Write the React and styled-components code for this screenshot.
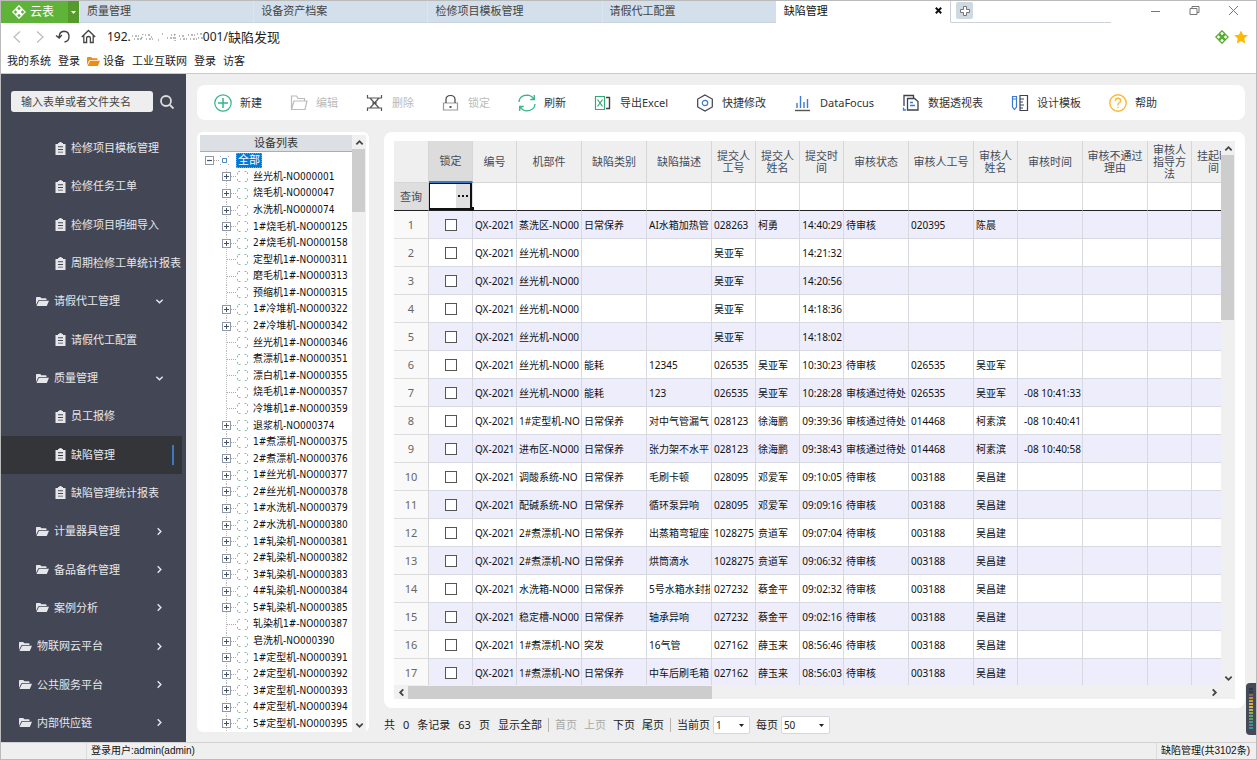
import React from "react";
import styled, { createGlobalStyle, css } from "styled-components";

const Global = createGlobalStyle`
  *, *::before, *::after { box-sizing: border-box; }
  html, body { margin: 0; padding: 0; }
  body, button, input, select {
    font-family: "Noto Sans", "Noto Sans CJK SC", sans-serif;
    font-size: 11px;
    line-height: 16px;
    color: #222;
  }
  button { border: 0; padding: 0; background: none; cursor: pointer; }
  svg { display: block; flex: none; }
  a { color: inherit; text-decoration: none; }
  ul { list-style: none; margin: 0; padding: 0; }
`;

const Window = styled.div`
  position: relative;
  display: flex;
  flex-direction: column;
  height: 100vh;
  min-height: 600px;
  overflow: hidden;
  border: 1px solid #bbb;
  background: #efefef;
`;

/* ---------- browser chrome ---------- */
const TitleBar = styled.header`
  display: flex;
  height: 22px;
  flex: none;
  background: #fff;
`;
const Brand = styled.button`
  display: flex;
  align-items: center;
  gap: 4px;
  width: 67px;
  padding-left: 11px;
  background: #5fb338;
  color: #fff;
  font-size: 12px;
`;
const BrandMenu = styled.button`
  display: flex;
  align-items: center;
  justify-content: center;
  width: 11px;
  background: #559b2c;
  color: #fff;
`;
const TabStrip = styled.nav`
  display: flex;
  flex: 1;
  min-width: 0;
`;
const Tab = styled.button`
  display: flex;
  flex: 1;
  align-items: center;
  justify-content: space-between;
  min-width: 0;
  padding: 0 8px 2px 7px;
  background: #d3dfea;
  border-left: 1px solid #dde6ee;
  border-bottom: 1px solid #c8d3de;
  color: #444;
  ${(p) =>
    p.$active &&
    css`
      background: #fff;
      border-color: #fff;
      border-right: 1px solid #c9d0d8;
      color: #111;
    `}
`;
const TabTools = styled.div`
  width: 160px;
  padding: 1px 5px;
  border-bottom: 1px solid #ccd2d8;
`;
const NewTab = styled.button`
  display: grid;
  place-items: center;
  width: 17px;
  height: 17px;
  border-radius: 2px;
  background: #cfd9e1;
`;
const WindowButtons = styled.div`
  display: flex;
  justify-content: flex-end;
  gap: 28px;
  width: 145px;
  padding: 4px 17px 0 0;
  color: #777;
`;
const AddressRow = styled.div`
  display: flex;
  align-items: center;
  flex: none;
  height: 29px;
  padding: 0 8px 2px 10px;
  background: #fff;
  color: #444;
`;
const NavButtons = styled.div`
  display: flex;
  align-items: center;
  gap: 11px;
  width: 96px;
`;
const Address = styled.a`
  display: flex;
  flex: 1;
  align-items: center;
  font-size: 13px;
  color: #222;
`;
const Host = styled.span`
  font-size: 12px;
`;
const AddressIcons = styled.div`
  display: flex;
  gap: 5px;
`;
const Bookmarks = styled.nav`
  display: flex;
  align-items: center;
  gap: 7px;
  flex: none;
  height: 22px;
  padding: 0 6px 3px;
  background: #fff;
  border-bottom: 1px solid #cacaca;
  a { display: flex; align-items: center; gap: 3px; }
`;

/* ---------- sidebar ---------- */
const Body = styled.div`
  display: flex;
  flex: 1;
  min-height: 0;
`;
const Sidebar = styled.aside`
  display: flex;
  flex-direction: column;
  width: 185px;
  flex: none;
  background: #434655;
  color: #e6e7ea;
`;
const SearchRow = styled.form`
  display: flex;
  align-items: center;
  gap: 6px;
  height: 55px;
  flex: none;
  padding-left: 10px;
`;
const SearchInput = styled.input`
  width: 142px;
  height: 21px;
  padding: 0 10px;
  border: 0;
  border-radius: 3px;
  background: #eee;
  &::placeholder { color: #444; opacity: 1; }
`;
const Menu = styled.ul`
  display: flex;
  flex-direction: column;
  flex: 1;
  min-height: 0;
`;
const MenuItem = styled.li`
  flex: 1;
  min-height: 0;
  margin-right: 4px;
  background: ${(p) => (p.$active ? "#333539" : "transparent")};
`;
const MenuLink = styled.a`
  display: flex;
  align-items: center;
  height: 100%;
  padding-left: ${(p) => [18, 35, 54][p.$level]}px;
  padding-right: ${(p) => (p.$active ? 8 : 0)}px;
  white-space: nowrap;
`;
const MenuIcon = styled.span`
  width: ${(p) => (p.$leaf ? 16 : 18)}px;
  flex: none;
`;
const MenuText = styled.span`
  flex: 1;
`;
const MenuArrow = styled.span`
  padding-right: 18px;
`;
const ActiveMark = styled.span`
  width: 2px;
  height: 20px;
  background: #3b78c0;
`;

/* ---------- workspace ---------- */
const Workspace = styled.main`
  display: flex;
  flex-direction: column;
  flex: 1;
  min-width: 0;
  gap: 12px;
  padding: 11px 11px 0 11px;
`;
const Toolbar = styled.div`
  display: flex;
  align-items: center;
  gap: 28px;
  height: 35px;
  flex: none;
  padding: 0 17px;
  border-radius: 8px;
  background: #fff;
`;
const ToolButton = styled.button`
  display: flex;
  align-items: center;
  gap: 8px;
  white-space: nowrap;
  color: #333;
  &:disabled { color: #bbb; }
`;
const Split = styled.div`
  display: flex;
  flex: 1;
  min-height: 0;
  gap: 15px;
`;
const TreePanel = styled.section`
  display: flex;
  width: 172px;
  flex: none;
  margin-bottom: 10px;
  padding: 3px 3px 0;
  border-radius: 6px;
  background: #fff;
`;
const TreeBody = styled.div`
  display: flex;
  flex-direction: column;
  flex: 1;
  min-width: 0;
`;
const TreeTitle = styled.h2`
  margin: 0;
  height: 17px;
  flex: none;
  border-bottom: 1px solid #e0a55a;
  background: #dce0e5;
  color: #333;
  font-size: 11px;
  font-weight: 400;
  line-height: 16px;
  text-align: center;
`;
const TreeList = styled.ul`
  display: flex;
  flex-direction: column;
  flex: 1;
  min-height: 0;
  font-family: "DejaVu Sans Condensed", "Noto Sans CJK SC", sans-serif;
  font-size: 10px;
  line-height: 16px;
  color: #111;
`;
const TreeRow = styled.li`
  display: flex;
  align-items: center;
  flex: 1;
  min-height: 0;
  padding-left: ${(p) => (p.$root ? 5 : 22)}px;
  white-space: nowrap;
`;
const Branch = styled.span`
  display: flex;
  align-items: center;
  align-self: stretch;
  width: 14px;
  ${(p) =>
    p.$line &&
    css`
      background: repeating-linear-gradient(#bbb 0 1px, transparent 1px 2px) 4px 0 / 1px 100% no-repeat;
    `}
`;
const Expander = styled.button`
  display: grid;
  place-items: center;
  width: 9px;
  height: 9px;
  border: 1px solid #9098a8;
  background: #fff;
`;
const Stub = styled.span`
  flex: 1;
  margin-left: ${(p) => (p.$leaf ? 5 : 0)}px;
  border-top: 1px dotted #aaa;
`;
const TreeLabel = styled.span`
  margin-left: 4px;
`;
const RootLabel = styled.span`
  margin-left: 7px;
  padding: 0 1px;
  border: 1px dotted #e09040;
  background: #0078d7;
  color: #fff;
  font-size: 11px;
  line-height: 13px;
`;

/* ---------- scroll bars ---------- */
const VBar = styled.div`
  display: flex;
  flex-direction: column;
  align-items: center;
  width: 14px;
  flex: none;
  background: #f0f0f0;
  color: #444;
`;
const HBar = styled.div`
  display: flex;
  align-items: center;
  height: 14px;
  flex: none;
  background: #f0f0f0;
  color: #444;
`;
const BarButton = styled.button`
  display: grid;
  place-items: center;
  width: 14px;
  height: 14px;
  flex: none;
  color: inherit;
`;
const VTrack = styled.div`
  flex: 1;
  width: 100%;
  padding-right: 1px;
`;
const VThumb = styled.div`
  height: ${(p) => p.$size}%;
  background: #cdcdcd;
`;
const HTrack = styled.div`
  flex: 1;
  height: 100%;
  padding-top: 1px;
`;
const HThumb = styled.div`
  width: ${(p) => p.$size}%;
  height: 100%;
  background: #cdcdcd;
`;
const GridVBar = styled(VBar)`
  padding-bottom: 14px;
`;

/* ---------- grid ---------- */
const GridColumn = styled.div`
  display: flex;
  flex-direction: column;
  flex: 1;
  min-width: 0;
`;
const GridCard = styled.section`
  display: flex;
  flex: 1;
  min-height: 0;
  padding: 9px 10px;
  border-radius: 8px;
  background: #fff;
`;
const GridPane = styled.div`
  display: flex;
  flex-direction: column;
  flex: 1;
  min-width: 0;
`;
const GridView = styled.div`
  flex: 1;
  min-height: 0;
  overflow: hidden;
`;
const Grid = styled.table`
  width: 100%;
  table-layout: fixed;
  border-collapse: separate;
  border-spacing: 0;
  white-space: nowrap;
`;
const ColHead = styled.th`
  height: 42px;
  padding: 0 4px;
  border-right: 1px solid #d6d6d6;
  border-bottom: 1px solid #d6d6d6;
  background: #efefef;
  color: #444b58;
  font-weight: 400;
  line-height: 12px;
  white-space: normal;
  ${(p) =>
    p.$selected &&
    css`
      background: #dcdcdc;
      border-bottom: 2px solid #4176c0;
    `}
`;
const QueryHead = styled.th`
  height: 28px;
  padding: 0;
  border-right: 1px solid #ccc;
  border-bottom: 1px solid #222;
  background: #dedede;
  color: #444b58;
  font-weight: 400;
`;
const QueryCell = styled.td`
  position: relative;
  height: 28px;
  padding: 0;
  border-right: 1px solid #dcdcdc;
  border-bottom: 1px solid #222;
`;
const QueryEditor = styled.div`
  display: flex;
  height: 27px;
  border: solid #111;
  border-width: 1px 2px 2px 1px;
`;
const QueryInput = styled.input`
  flex: 1;
  min-width: 0;
  border: 0;
  outline: 0;
  background: #fff;
`;
const QueryMore = styled.button`
  display: grid;
  place-items: center;
  width: 14px;
  background: #e0e0e0;
`;
const FillHandle = styled.span`
  position: absolute;
  right: -2px;
  bottom: -1px;
  width: 4px;
  height: 4px;
  background: #111;
`;
const RowHead = styled.th`
  height: 28px;
  padding: 0;
  border-right: 1px solid #d6d6d6;
  border-bottom: 1px solid #dcdcdc;
  background: #f9f9f9;
  color: #666;
  font-weight: 400;
`;
const Cell = styled.td`
  height: 28px;
  padding: 0 1px 0 2px;
  border-right: 1px solid #d8d8e0;
  border-bottom: 1px solid #d8d8e0;
  background: ${(p) => (p.$odd ? "#ededfc" : "#fff")};
  color: #111;
  font-size: 10px;
`;
const CellText = styled.div`
  display: flex;
  justify-content: ${(p) => (p.$end ? "flex-end" : "flex-start")};
  overflow: hidden;
`;
const Check = styled.input`
  appearance: none;
  display: block;
  width: 12px;
  height: 12px;
  margin: 0 auto;
  border: 1px solid #555;
  background: #fff;
`;

/* ---------- footer ---------- */
const Pager = styled.div`
  display: flex;
  align-items: center;
  gap: 6px;
  height: 34px;
  flex: none;
  color: #222;
  white-space: nowrap;
`;
const PagerGroup = styled.div`
  display: flex;
  gap: ${(p) => p.$gap}px;
`;
const PagerButton = styled.button`
  &:disabled { color: #aaa; }
`;
const Divider = styled.span`
  width: 1px;
  height: 14px;
  background: #b5b5b5;
`;
const PagerField = styled.label`
  display: flex;
  align-items: center;
  gap: 3px;
`;
const SelectBox = styled.span`
  display: flex;
  align-items: center;
  width: ${(p) => p.$width}px;
  height: 18px;
  padding: 0 5px 0 2px;
  border: 1px solid #d4d7de;
  border-radius: 2px;
  background: #fff;
`;
const Select = styled.select`
  appearance: none;
  flex: 1;
  min-width: 0;
  padding: 0;
  border: 0;
  outline: 0;
  background: none;
  font-size: 10px;
`;
const StatusBar = styled.footer`
  display: flex;
  justify-content: space-between;
  flex: none;
  height: 17px;
  padding: 0 6px 0 85px;
  border-top: 1px solid #d2d2d2;
`;
const StatusItem = styled.span`
  padding-left: 4px;
  border-left: 1px solid #ddd;
  font-family: "Liberation Sans", "Noto Sans CJK SC", sans-serif;
  font-size: 10px;
  color: #111;
`;
const SideMeter = styled.div`
  position: absolute;
  right: 0;
  bottom: 24px;
  width: 10px;
  height: 52px;
  padding: 5px 3px;
  border-radius: 4px 0 0 4px;
  background: #464957;
`;

/* ---------- drawings ---------- */
const Svg = ({ w = 18, h, vw, vh, children, ...rest }) => (
  <svg
    width={w}
    height={h ?? w}
    viewBox={`0 0 ${vw ?? w} ${vh ?? vw ?? h ?? w}`}
    fill="none"
    stroke="currentColor"
    strokeWidth="1.2"
    aria-hidden="true"
    {...rest}
  >
    {children}
  </svg>
);
const CloverIcon = ({ size, ...rest }) => (
  <Svg w={size} vw={14} strokeWidth="1.3" {...rest}>
    <path d="M4.300 3.500 7 .8l2.700 2.700L7 6.200ZM4.300 10.500 7 7.800l2.700 2.700L7 13.200ZM.8 7l2.700-2.700L6.200 7 3.500 9.700ZM7.800 7l2.700-2.700L13.200 7l-2.700 2.700Z" />
  </Svg>
);
const CaretIcon = () => (
  <Svg w={5} h={3} stroke="none" fill="currentColor">
    <path d="M0 0h5L2.5 3Z" />
  </Svg>
);
const Chevron = ({ dir, size = 9, width = 2 }) => (
  <Svg w={size} vw={10} strokeWidth={width}>
    <path
      d={{ up: "M1.5 7 5 3.5 8.5 7", down: "M1.5 3 5 6.5 8.5 3", left: "M7 1.5 3.5 5 7 8.5", right: "M3 1.5 6.5 5 3 8.5" }[dir]}
    />
  </Svg>
);
const FolderIcon = ({ w = 13, ...rest }) => (
  <Svg w={w} h={11} vw={13} vh={11} stroke="none" fill="currentColor" {...rest}>
    <path d="M0 9V1.800Q0 1 .8 1h3.400l1.200 1.300h4.300q.8 0 .8.8v.9H3.200q-.8 0-1.100.7Z" />
    <path d="M.5 10 2.800 5.200q.2-.4.7-.4H13l-2 4.700q-.2.5-.8.5Z" />
  </Svg>
);
const ClipIcon = () => (
  <Svg w={11} h={13} stroke="none" fill="currentColor">
    <path fillRule="evenodd" d="M3 1h1Q4.200 0 5.500 0T7 1h1v1h2.500v11H.5V2H3ZM3 4.300v.9h5v-.9ZM3 7v.9h5V7ZM3 9.700v.9h5v-.9Z" />
  </Svg>
);

const toolIcons = {
  add: (
    <Svg stroke="#35b58b">
      <circle cx="9" cy="9" r="8.200" />
      <path d="M9 4v10M4 9h10" strokeWidth="1.500" />
    </Svg>
  ),
  edit: (
    <Svg stroke="#bbb">
      <path d="M1.500 15.500V2h5l1.500 2.500h6.500V7M1.500 15.500 4 7h13l-2 8.500Z" />
    </Svg>
  ),
  remove: (
    <Svg stroke="#555">
      <path d="M1.500 1v3h14V1M1.500 17v-3h14v3M4 4l9 10M13 4 4 14M6 9h5" />
    </Svg>
  ),
  lock: (
    <Svg stroke="#999">
      <path d="M1.500 9h14v7h-14Z" />
      <path d="M4 9V5.500Q4 1.500 8.500 1.500T13 5.500V9" stroke="#444" />
      <path d="M7.500 13h2" stroke="#444" strokeWidth="1.800" />
    </Svg>
  ),
  refresh: (
    <Svg stroke="#35b58b" strokeWidth="1.300">
      <path d="M1 8Q1.500 1.500 9 1.200q4 0 6.500 3.500M17 10q-.5 6.500-8 6.800-4 0-6.500-3.500M16.300 1v4.500h-4M1.700 17v-4.500h4" />
    </Svg>
  ),
  excel: (
    <Svg stroke="#35a778">
      <path d="M1.500 2.500h9v13h-9ZM3.500 5.500l5 7M8.500 5.500l-5 7" />
      <path d="M12 3.500h3.500v11H12" stroke="#444" strokeWidth="1.400" />
    </Svg>
  ),
  quick: (
    <Svg stroke="#3e4250">
      <path d="m9 1 7.300 4v8L9 17l-7.300-4V5Z" />
      <circle cx="9" cy="9" r="2.700" stroke="#3b7bd0" />
    </Svg>
  ),
  chart: (
    <Svg stroke="#3b7bd0" strokeWidth="1.400">
      <path d="M3 14V9M6.500 14V2M10 14V8M13.500 14V5" />
      <path d="M1 16.500h15" stroke="#555" />
    </Svg>
  ),
  pivot: (
    <Svg stroke="#3e4250" strokeWidth="1.300">
      <path d="M5.500 4.500h7l3.500 3V16H5.500Z" />
      <path d="M2 12V1.500h9.500V4" />
      <path d="M8 8.500h3M8 11.500h5M1.500 13.500V16H4" stroke="#3b7bd0" />
    </Svg>
  ),
  design: (
    <Svg stroke="#3b7bd0">
      <path d="M1.500 2.500H5.500v10.500l-2 2.500-2-2.500ZM1.500 5h4" />
      <path d="M9 1.500H16.500v15H9ZM9 5h4M9 8h3M9 11h4M9 14h3" stroke="#3e4250" />
    </Svg>
  ),
  help: (
    <Svg stroke="#fbb92e" strokeWidth="1.400">
      <circle cx="9" cy="9" r="8.200" />
      <path d="M6.300 7q.2-2.700 2.700-2.700T11.700 6.800Q11.700 8 10 9T9 11.300M9 12.700v1.300" />
    </Svg>
  ),
};

/* ---------- data ---------- */
const tabs = ["质量管理", "设备资产档案", "检修项目模板管理", "请假代工配置", "缺陷管理"];

const menu = [
  [2, "检修项目模板管理"],
  [2, "检修任务工单"],
  [2, "检修项目明细导入"],
  [2, "周期检修工单统计报表"],
  [1, "请假代工管理", "down"],
  [2, "请假代工配置"],
  [1, "质量管理", "down"],
  [2, "员工报修"],
  [2, "缺陷管理"],
  [2, "缺陷管理统计报表"],
  [1, "计量器具管理", "right"],
  [1, "备品备件管理", "right"],
  [1, "案例分析", "right"],
  [0, "物联网云平台", "right"],
  [0, "公共服务平台", "right"],
  [0, "内部供应链", "right"],
];

const tools = [
  ["add", "新建"],
  ["edit", "编辑", true],
  ["remove", "删除", true],
  ["lock", "锁定", true],
  ["refresh", "刷新"],
  ["excel", "导出Excel"],
  ["quick", "快捷修改"],
  ["chart", "DataFocus"],
  ["pivot", "数据透视表"],
  ["design", "设计模板"],
  ["help", "帮助"],
];

const devices = [
  "丝光机-NO000001", "烧毛机-NO000047", "水洗机-NO000074", "1#烧毛机-NO000125", "2#烧毛机-NO000158",
  "定型机1#-NO000311", "磨毛机1#-NO000313", "预缩机1#-NO000315", "1#冷堆机-NO000322", "2#冷堆机-NO000342",
  "丝光机1#-NO000346", "煮漂机1#-NO000351", "漂白机1#-NO000355", "烧毛机1#-NO000357", "冷堆机1#-NO000359",
  "退浆机-NO000374", "1#煮漂机-NO000375", "2#煮漂机-NO000376", "1#丝光机-NO000377", "2#丝光机-NO000378",
  "1#水洗机-NO000379", "2#水洗机-NO000380", "1#轧染机-NO000381", "2#轧染机-NO000382", "3#轧染机-NO000383",
  "4#轧染机-NO000384", "5#轧染机-NO000385", "轧染机1#-NO000387", "皂洗机-NO000390", "1#定型机-NO000391",
  "2#定型机-NO000392", "3#定型机-NO000393", "4#定型机-NO000394", "5#定型机-NO000395",
];

const columns = [
  ["锁定", 44], ["编号", 44], ["机部件", 65], ["缺陷类别", 65], ["缺陷描述", 65],
  ["提交人工号", 44], ["提交人姓名", 44], ["提交时间", 44], ["审核状态", 65], ["审核人工号", 65],
  ["审核人姓名", 44], ["审核时间", 65], ["审核不通过理由", 65], ["审核人指导方法", 44], ["挂起时间", 44],
];
const TIME_COLUMNS = [6, 10];

const daily = "日常保养";
const wait = "待审核";
const passed = "审核通过待处";
const rows = [
  ["蒸洗区-NO00", daily, "AI水箱加热管", "028263", "柯勇", "14:40:29", wait, "020395", "陈晨", ""],
  ["丝光机-NO00", "", "", "吴亚军", "", "14:21:32", "", "", "", ""],
  ["丝光机-NO00", "", "", "吴亚军", "", "14:20:56", "", "", "", ""],
  ["丝光机-NO00", "", "", "吴亚军", "", "14:18:36", "", "", "", ""],
  ["丝光机-NO00", "", "", "吴亚军", "", "14:18:02", "", "", "", ""],
  ["丝光机-NO00", "能耗", "12345", "026535", "吴亚军", "10:30:23", wait, "026535", "吴亚军", ""],
  ["丝光机-NO00", "能耗", "123", "026535", "吴亚军", "10:28:28", passed, "026535", "吴亚军", "-08 10:41:33"],
  ["1#定型机-NO", daily, "对中气管漏气", "028123", "徐海鹏", "09:39:36", passed, "014468", "柯素滨", "-08 10:40:41"],
  ["进布区-NO00", daily, "张力架不水平", "028123", "徐海鹏", "09:38:43", passed, "014468", "柯素滨", "-08 10:40:58"],
  ["调酸系统-NO", daily, "毛刷卡顿", "028095", "邓爱军", "09:10:05", wait, "003188", "吴昌建", ""],
  ["配碱系统-NO", daily, "循环泵异响", "028095", "邓爱军", "09:09:16", wait, "003188", "吴昌建", ""],
  ["2#煮漂机-NO", daily, "出蒸箱弯辊座", "1028275", "贲道军", "09:07:04", wait, "003188", "吴昌建", ""],
  ["2#煮漂机-NO", daily, "烘筒滴水", "1028275", "贲道军", "09:06:32", wait, "003188", "吴昌建", ""],
  ["水洗箱-NO00", daily, "5号水箱水封损", "027232", "蔡金平", "09:02:32", wait, "003188", "吴昌建", ""],
  ["稳定槽-NO00", daily, "轴承异响", "027232", "蔡金平", "09:02:16", wait, "003188", "吴昌建", ""],
  ["1#煮漂机-NO", "突发", "16气管", "027162", "薛玉来", "08:56:46", wait, "003188", "吴昌建", ""],
  ["1#煮漂机-NO", daily, "中车后刷毛箱", "027162", "薛玉来", "08:56:03", wait, "003188", "吴昌建", ""],
];

const meter = ["#283a50", "#283a50", "#8a6a40", "#c08a40", "#c8a040", "#d0b048", "#d0b850", "#b8b850", "#90b058", "#68a860", "#50a070", "#489888", "#409090", "#389098"];

/* ---------- parts ---------- */
function Chrome() {
  return (
    <>
      <TitleBar>
        <Brand>
          <CloverIcon size={14} />
          云表
        </Brand>
        <BrandMenu aria-label="菜单">
          <CaretIcon />
        </BrandMenu>
        <TabStrip>
          {tabs.map((t, i) => (
            <Tab key={t} $active={i === 4}>
              {t}
              {i === 4 && (
                <Svg w={7} strokeWidth="2"><path d="m.8.8 5.400 5.400M6.200.8.8 6.200" /></Svg>
              )}
            </Tab>
          ))}
        </TabStrip>
        <TabTools>
          <NewTab aria-label="新标签">
            <Svg w={10} stroke="#777" fill="#fff" strokeWidth="1">
              <path d="M3.500 .5h3v3h3v3h-3v3h-3v-3h-3v-3h3Z" />
            </Svg>
          </NewTab>
        </TabTools>
        <WindowButtons>
          <Svg w={11} strokeWidth="1"><path d="M1 6.500h9" /></Svg>
          <Svg w={11} strokeWidth="1"><path d="M1 3.500h7v6H1ZM3 3.500v-2h7v6H8" /></Svg>
          <Svg w={11} strokeWidth="1"><path d="m1 1 9 9M10 1l-9 9" /></Svg>
        </WindowButtons>
      </TitleBar>
      <AddressRow>
        <NavButtons>
          <Svg w={11} h={14} stroke="#bbb"><path d="M9 1.500 3 7l6 5.500" /></Svg>
          <Svg w={11} h={14} stroke="#bbb"><path d="m4 1.500 6 5.500-6 5.500" /></Svg>
          <Svg w={15} strokeWidth="1.400">
            <path d="M1 6.500 4.200 9 6.800 6M4 8.500Q4.200 2.500 9 2.300q5 .2 5 5.200T9.500 13" />
          </Svg>
          <Svg w={15} strokeWidth="1.300">
            <path d="M.8 8 7.500 1.500 14.200 8M2.800 6.500v7h2.800V9q0-1.500 1.900-1.500T9.400 9v4.500h2.800v-7" />
          </Svg>
        </NavButtons>
        <Address href="#address">
          <Host>192.</Host>
          <Svg w={72} h={12} stroke="#777" strokeWidth="1" strokeDasharray="1 2 2 1 1 3">
            <path d="M1 5h8M3 8h8M12 3l-2 6M14 4h6M15 8h7M20 6h3M27 9h2M31 3h2M36 7h9M40 4h4M44 3v7M48 5h6M49 8h7M57 4h7M59 8h8M66 3h5M67 7h6" />
          </Svg>
          <Host>001/</Host>缺陷发现
        </Address>
        <AddressIcons>
          <CloverIcon size={14} stroke="#5aab32" />
          <Svg w={14} stroke="none" fill="#ffb900">
            <path d="m7 .5 2 4.300 4.800.5-3.500 3.300.9 4.900L7 11.200l-4.200 2.300.9-4.900L.2 5.300 5 4.800Z" />
          </Svg>
        </AddressIcons>
      </AddressRow>
      <Bookmarks>
        <a href="#system">我的系统</a>
        <a href="#login">登录</a>
        <a href="#device"><FolderIcon color="#f28a14" />设备</a>
        <a href="#iiot">工业互联网</a>
        <a href="#login2">登录</a>
        <a href="#guest">访客</a>
      </Bookmarks>
    </>
  );
}

function SideNav() {
  return (
    <Sidebar>
      <SearchRow>
        <SearchInput aria-label="搜索" placeholder="输入表单或者文件夹名" />
        <Svg w={16} stroke="#ddd" strokeWidth="1.800">
          <circle cx="7" cy="7" r="5" />
          <path d="m10.800 10.800 3.700 3.700" />
        </Svg>
      </SearchRow>
      <Menu>
        {menu.map(([level, text, arrow]) => {
          const active = text === "缺陷管理";
          return (
            <MenuItem key={text} $active={active}>
              <MenuLink href={`#${text}`} $level={level} $active={active}>
                <MenuIcon $leaf={level === 2}>{level === 2 ? <ClipIcon /> : <FolderIcon />}</MenuIcon>
                <MenuText>{text}</MenuText>
                {arrow && <MenuArrow><Chevron dir={arrow} width={1.6} /></MenuArrow>}
                {active && <ActiveMark />}
              </MenuLink>
            </MenuItem>
          );
        })}
      </Menu>
    </Sidebar>
  );
}

function VerticalBar({ size, as: Bar = VBar }) {
  return (
    <Bar>
      <BarButton aria-label="向上"><Chevron dir="up" /></BarButton>
      <VTrack><VThumb $size={size} /></VTrack>
      <BarButton aria-label="向下"><Chevron dir="down" /></BarButton>
    </Bar>
  );
}

function DeviceTree() {
  return (
    <TreePanel>
      <TreeBody>
        <TreeTitle>设备列表</TreeTitle>
        <TreeList>
          <TreeRow $root>
            <Branch>
              <Expander aria-label="折叠"><Svg w={5} stroke="#456"><path d="M0 2.500h5" /></Svg></Expander>
              <Stub />
            </Branch>
            <Svg w={10} stroke="#4a8ac8" strokeWidth="1">
              <path d="M3.500 3.500h4v4h-4Z" />
              <path d="M1.500 1v1M9.500 1v1M1.500 9v1M9.500 9v1" stroke="#aac" />
            </Svg>
            <RootLabel>全部</RootLabel>
          </TreeRow>
          {devices.map((name) => {
            const leaf = name.includes("机1#");
            return (
              <TreeRow key={name}>
                <Branch $line>
                  {!leaf && (
                    <Expander aria-label="展开">
                      <Svg w={5} stroke="#456" strokeWidth="1"><path d="M0 2.500h5M2.500 0v5" /></Svg>
                    </Expander>
                  )}
                  <Stub $leaf={leaf} />
                </Branch>
                <Svg w={13} stroke="#8ab8a8" strokeWidth="1">
                  <path d="M1.500 4.500v-2q0-1 1-1h2M8.500 1.500h2q1 0 1 1v2M11.500 8.500v2q0 1-1 1h-2M4.500 11.500h-2q-1 0-1-1v-2" strokeDasharray="2 1" />
                </Svg>
                <TreeLabel>{name}</TreeLabel>
              </TreeRow>
            );
          })}
        </TreeList>
      </TreeBody>
      <VerticalBar size={11} />
    </TreePanel>
  );
}

function DefectGrid() {
  return (
    <GridCard>
      <GridPane>
        <GridView>
          <Grid>
            <colgroup>
              <col width={35} />
              {columns.map(([name, width]) => <col key={name} width={width} />)}
            </colgroup>
            <thead>
              <tr>
                <ColHead />
                {columns.map(([name], i) => (
                  <ColHead key={name} scope="col" $selected={i === 0}>{name}</ColHead>
                ))}
              </tr>
              <tr>
                <QueryHead scope="row">查询</QueryHead>
                {columns.map(([name], i) => (
                  <QueryCell key={name}>
                    {i === 0 && (
                      <>
                        <QueryEditor>
                          <QueryInput aria-label="查询锁定" />
                          <QueryMore aria-label="更多">
                            <Svg w={10} h={2} stroke="none" fill="#111"><path d="M0 0h2v2H0ZM4 0h2v2H4ZM8 0h2v2H8Z" /></Svg>
                          </QueryMore>
                        </QueryEditor>
                        <FillHandle />
                      </>
                    )}
                  </QueryCell>
                ))}
              </tr>
            </thead>
            <tbody>
              {rows.map((row, r) => {
                const odd = r % 2 === 0;
                const values = ["QX-2021", ...row];
                return (
                  <tr key={r}>
                    <RowHead scope="row">{r + 1}</RowHead>
                    <Cell $odd={odd}><Check type="checkbox" aria-label={`锁定 ${r + 1}`} /></Cell>
                    {values.map((v, c) => (
                      <Cell key={c} $odd={odd}>
                        <CellText $end={TIME_COLUMNS.includes(c)}>{v}</CellText>
                      </Cell>
                    ))}
                    {[0, 1, 2].map((c) => <Cell key={`e${c}`} $odd={odd} />)}
                  </tr>
                );
              })}
            </tbody>
          </Grid>
        </GridView>
        <HBar>
          <BarButton aria-label="向左"><Chevron dir="left" /></BarButton>
          <HTrack><HThumb $size={38} /></HTrack>
          <BarButton aria-label="向右"><Chevron dir="right" /></BarButton>
        </HBar>
      </GridPane>
      <VerticalBar size={32} as={GridVBar} />
    </GridCard>
  );
}

function PagerSelect({ label, value, width }) {
  return (
    <PagerField>
      {label}
      <SelectBox $width={width}>
        <Select defaultValue={value}><option>{value}</option></Select>
        <CaretIcon />
      </SelectBox>
    </PagerField>
  );
}

export default function App() {
  return (
    <Window>
      <Global />
      <Chrome />
      <Body>
        <SideNav />
        <Workspace>
          <Toolbar>
            {tools.map(([icon, text, disabled]) => (
              <ToolButton key={icon} disabled={disabled}>
                {toolIcons[icon]}
                {text}
              </ToolButton>
            ))}
          </Toolbar>
          <Split>
            <DeviceTree />
            <GridColumn>
              <DefectGrid />
              <Pager>
                <PagerGroup $gap={8}>
                  <span>共</span>
                  <span>0</span>
                  <span>条记录</span>
                  <span>63</span>
                  <span>页</span>
                  <PagerButton>显示全部</PagerButton>
                </PagerGroup>
                <Divider />
                <PagerGroup $gap={7}>
                  <PagerButton disabled>首页</PagerButton>
                  <PagerButton disabled>上页</PagerButton>
                  <PagerButton>下页</PagerButton>
                  <PagerButton>尾页</PagerButton>
                </PagerGroup>
                <Divider />
                <PagerSelect label="当前页" value="1" width={37} />
                <PagerSelect label="每页" value="50" width={49} />
              </Pager>
            </GridColumn>
          </Split>
        </Workspace>
      </Body>
      <StatusBar>
        <StatusItem>登录用户:admin(admin)</StatusItem>
        <StatusItem>缺陷管理(共3102条)</StatusItem>
      </StatusBar>
      <SideMeter>
        <Svg w={4} h={42} strokeWidth="2">
          {meter.map((color, i) => <path key={i} d={`M0 ${i * 3 + 1}h4`} stroke={color} />)}
        </Svg>
      </SideMeter>
    </Window>
  );
}
